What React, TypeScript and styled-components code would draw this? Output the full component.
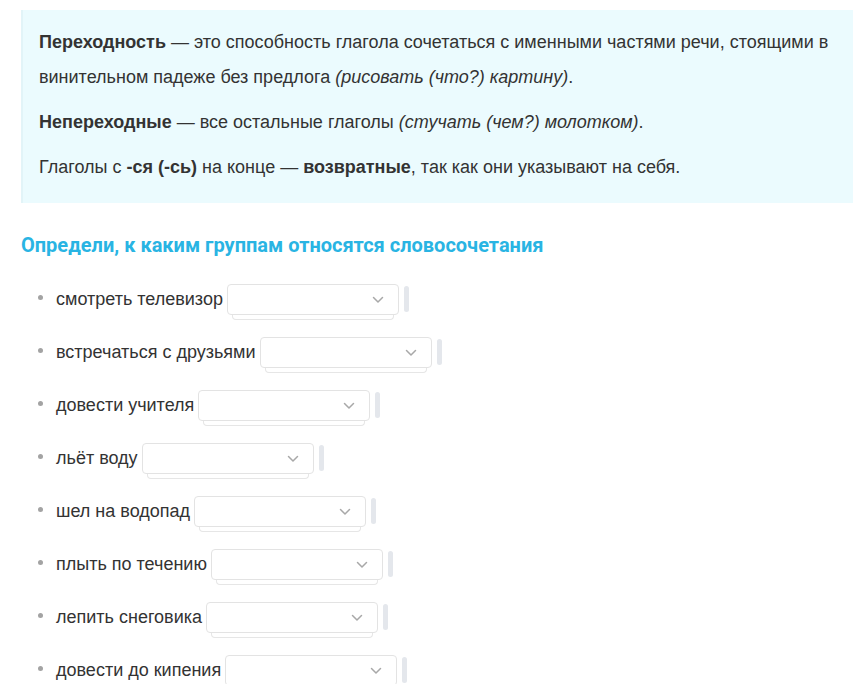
import React from 'react'
import styled, { createGlobalStyle } from 'styled-components'

const GlobalStyle = createGlobalStyle`
  body {
    margin: 0;
    background: #ffffff;
    font-family: 'Liberation Sans', Arial, sans-serif;
    color: #333333;
  }
`

const items = [
  'смотреть телевизор',
  'встречаться с друзьями',
  'довести учителя',
  'льёт воду',
  'шел на водопад',
  'плыть по течению',
  'лепить снеговика',
  'довести до кипения',
]

const Page = styled.div`
  padding: 10px 11px 0 21px;
`

const Note = styled.div`
  background: #ebfbfe;
  border-left: 2px solid #e2f4f8;
  padding: 15px 18px 8px 16px;
`

const Para = styled.p`
  margin: 0 0 10px;
  font-size: 18px;
  line-height: 35px;
  color: #333333;
`

const Title = styled.h3`
  margin: 29px 0 15px;
  font-family: Roboto, 'Liberation Sans', sans-serif;
  font-weight: 700;
  font-size: 20px;
  line-height: 26px;
  color: #29b4e3;
`

const List = styled.ul`
  list-style: none;
  margin: 0;
  padding: 0 0 0 17px;
`

const Row = styled.li`
  display: flex;
  align-items: center;
  height: 53px;
  font-size: 18px;
  color: #333333;
`

const Bullet = styled.span`
  width: 5px;
  height: 5px;
  border-radius: 50%;
  background: #a3a3a3;
  margin: -4px 13px 0 0;
  flex: none;
`

const SelectWrap = styled.div`
  position: relative;
  margin-left: 4px;
  width: 172px;
  height: 31px;
  flex: none;
`

const SelectBox = styled.div`
  position: relative;
  z-index: 1;
  box-sizing: border-box;
  height: 31px;
  background: #ffffff;
  border: 1px solid #e3e3e3;
  border-radius: 4px;
  display: flex;
  align-items: center;
  justify-content: flex-end;
  padding-right: 14px;
`

const Shadow = styled.div`
  position: absolute;
  left: 5px;
  right: 5px;
  bottom: -5px;
  height: 12px;
  border: 1px solid #e6e6e6;
  border-top: none;
  border-radius: 0 0 4px 4px;
  background: #ffffff;
`

const Handle = styled.span`
  width: 5px;
  height: 26px;
  border-radius: 3px;
  background: #e4e7ec;
  margin: -2px 0 0 5px;
  flex: none;
`

const Chevron = () => (
  <svg width="12" height="8" viewBox="0 0 12 8" fill="none">
    <path d="M1.5 1.5 L6 6 L10.5 1.5" stroke="#a8a8a8" strokeWidth="1.5" strokeLinecap="round" strokeLinejoin="round" />
  </svg>
)

export default function App() {
  return (
    <>
      <GlobalStyle />
      <Page>
        <Note>
          <Para>
            <b>Переходность</b> — это способность глагола сочетаться с именными частями речи, стоящими в
            винительном падеже без предлога <i>(рисовать (что?) картину)</i>.
          </Para>
          <Para>
            <b>Непереходные</b> — все остальные глаголы <i>(стучать (чем?) молотком)</i>.
          </Para>
          <Para>
            Глаголы с <b>-ся (-сь)</b> на конце — <b>возвратные</b>, так как они указывают на себя.
          </Para>
        </Note>
        <Title>Определи, к каким группам относятся словосочетания</Title>
        <List>
          {items.map((t) => (
            <Row key={t}>
              <Bullet />
              {t}
              <SelectWrap>
                <Shadow />
                <SelectBox>
                  <Chevron />
                </SelectBox>
              </SelectWrap>
              <Handle />
            </Row>
          ))}
        </List>
      </Page>
    </>
  )
}
